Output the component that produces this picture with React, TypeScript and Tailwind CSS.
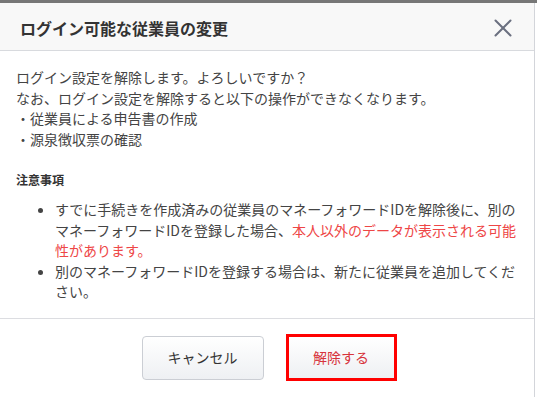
import { X } from 'lucide-react'

const notes = [
  {
    plain: 'すでに手続きを作成済みの従業員のマネーフォワードIDを解除後に、別のマネーフォワードIDを登録した場合、',
    warn: '本人以外のデータが表示される可能性があります。',
  },
  {
    plain: '別のマネーフォワードIDを登録する場合は、新たに従業員を追加してください。',
    warn: '',
  },
]

export default function App() {
  return (
    <div className="h-[397px] w-[537px] overflow-hidden bg-white font-['Noto_Sans_CJK_JP','Noto_Sans',sans-serif] text-[#444444]">
      {/* page behind the dialog, cropped */}
      <div className="h-[3px] bg-[#777777]" />

      <div className="w-[535px] border-r border-[#d3d5da] bg-white">
        <div className="flex h-[48px] items-center justify-between border-b border-[#d8dade] bg-[#f8f8f8] pl-5 pr-[16px] pt-[3px]">
          <h1 className="text-[16px] leading-[20px] font-bold text-[#333333]">
            ログイン可能な従業員の変更
          </h1>
          <X className="h-[30px] w-[30px] text-[#6b7080]" strokeWidth={1.6} />
        </div>

        <div className="px-4 pt-[16px] pb-[16px] text-[14px] leading-[20.5px]">
          <p>ログイン設定を解除します。よろしいですか？</p>
          <p>なお、ログイン設定を解除すると以下の操作ができなくなります。</p>
          <p>・従業員による申告書の作成</p>
          <p>・源泉徴収票の確認</p>

          <h2 className="mt-[22px] text-[12px] leading-[18px] font-bold text-[#333333]">
            注意事項
          </h2>
          <ul className="mt-[10px] list-disc pl-[39px]">
            {notes.map((n) => (
              <li key={n.plain}>
                {n.plain}
                {n.warn ? <span className="text-[#ee4646]">{n.warn}</span> : null}
              </li>
            ))}
          </ul>
        </div>

        <div className="flex h-[80px] items-start justify-center gap-[22px] border-t border-[#dcdde1] pt-[15px] pl-[4px]">
          <button className="mt-[2px] h-[44px] w-[122px] rounded-[4px] border border-[#cbced4] bg-linear-to-b from-white to-[#eef0f3] text-[14px] text-[#333333]">
            キャンセル
          </button>
          <button className="h-[47px] w-[111px] border-[3px] border-[#ff0000] bg-linear-to-b from-white to-[#eef0f3] text-[14px] text-[#d7343c]">
            解除する
          </button>
        </div>
      </div>
    </div>
  )
}
